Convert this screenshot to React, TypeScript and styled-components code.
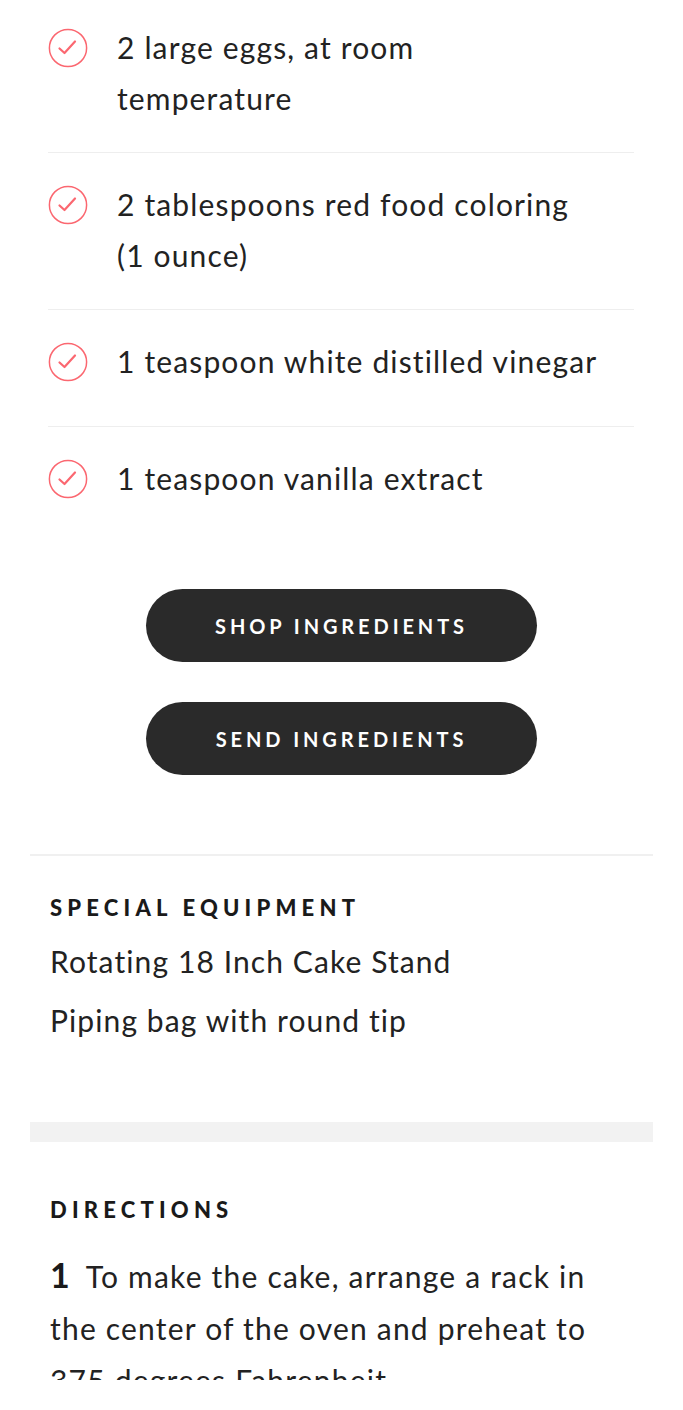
import styled, { createGlobalStyle } from 'styled-components';

const INGREDIENTS = [
  { lines: ['2 large eggs, at room', 'temperature'] },
  { lines: ['2 tablespoons red food coloring', '(1 ounce)'] },
  { lines: ['1 teaspoon white distilled vinegar'] },
  { lines: ['1 teaspoon vanilla extract'], last: true },
];

const EQUIPMENT = ['Rotating 18 Inch Cake Stand', 'Piping bag with round tip'];

const GlobalStyle = createGlobalStyle`
  html, body {
    margin: 0;
    padding: 0;
    background: #ffffff;
  }
  body {
    font-family: Lato, 'Open Sans', sans-serif;
    font-variant-ligatures: none;
    color: #222222;
    -webkit-font-smoothing: antialiased;
  }
`;

const Screen = styled.div`
  width: 683px;
  height: 1410px;
  overflow: hidden;
  background: #ffffff;
`;

const Viewport = styled.main`
  height: 1380px;
  overflow: hidden;
  padding: 0 30px;
  box-sizing: border-box;
`;

const IngredientList = styled.ul`
  list-style: none;
  margin: -4px 0 0;
  padding: 0 19px 0 18px;
`;

const IngredientRow = styled.li<{ $last?: boolean }>`
  display: flex;
  align-items: flex-start;
  gap: 29px;
  min-height: 117px;
  box-sizing: border-box;
  padding: 26px 0 28px;
  border-bottom: ${(p) => (p.$last ? 'none' : '1px solid #eeeeee')};
`;

const CheckBox = styled.span`
  flex: 0 0 40px;
  height: 40px;
  margin-top: 6px;
  display: flex;
  align-items: center;
  justify-content: center;
`;

const IngredientText = styled.span`
  display: flex;
  flex-direction: column;
  font-size: 30px;
  line-height: 51px;
  letter-spacing: 1.15px;
  color: #222222;
`;

const ButtonStack = styled.div`
  display: flex;
  flex-direction: column;
  align-items: center;
  gap: 40px;
  margin-top: 45px;
`;

const PillButton = styled.button`
  width: 391px;
  height: 73px;
  border: none;
  border-radius: 37px;
  background: #2a2a2a;
  color: #ffffff;
  font-family: Lato, sans-serif;
  font-size: 20px;
  font-weight: 700;
  letter-spacing: 3.9px;
  text-transform: uppercase;
  cursor: pointer;
`;

const Divider = styled.hr`
  margin: 79px 0 0;
  border: none;
  height: 2px;
  background: #f0f0f0;
`;

const Section = styled.section<{ $top: number }>`
  padding: ${(p) => p.$top}px 40px 0 20px;
`;

const Heading = styled.h2`
  margin: 0;
  font-size: 22px;
  line-height: 28px;
  font-weight: 900;
  letter-spacing: 5.2px;
  text-transform: uppercase;
  color: #1a1a1a;
`;

const EquipmentList = styled.ul`
  list-style: none;
  margin: 10px 0 0;
  padding: 0;
`;

const EquipmentItem = styled.li`
  font-size: 30px;
  line-height: 59px;
  letter-spacing: 1.1px;
  color: #222222;
`;

const GrayBar = styled.div`
  height: 20px;
  margin-top: 72px;
  background: #f2f2f2;
`;

const Step = styled.p`
  margin: 26px 0 0;
  font-size: 30px;
  line-height: 52px;
  letter-spacing: 1.2px;
  color: #222222;
`;

const StepNumber = styled.span`
  font-size: 34px;
  line-height: 1;
  font-weight: 700;
  letter-spacing: 0;
  color: #1a1a1a;
  margin-right: 16px;
`;

const CheckIcon = () => (
  <svg width="40" height="40" viewBox="0 0 40 40" fill="none">
    <circle cx="20" cy="20" r="18.6" stroke="#fb6770" strokeWidth="1.5" />
    <path
      d="M11.5 20.5 L16.5 25 L27 13.5"
      stroke="#fb6770"
      strokeWidth="2.2"
      strokeLinecap="round"
      strokeLinejoin="round"
    />
  </svg>
);

export default function App() {
  return (
    <Screen>
      <GlobalStyle />
      <Viewport>
        <IngredientList>
          {INGREDIENTS.map((item) => (
            <IngredientRow key={item.lines[0]} $last={item.last}>
              <CheckBox>
                <CheckIcon />
              </CheckBox>
              <IngredientText>
                {item.lines.map((l) => (
                  <span key={l}>{l}</span>
                ))}
              </IngredientText>
            </IngredientRow>
          ))}
        </IngredientList>

        <ButtonStack>
          <PillButton>Shop Ingredients</PillButton>
          <PillButton>Send Ingredients</PillButton>
        </ButtonStack>

        <Divider />

        <Section $top={38}>
          <Heading>Special Equipment</Heading>
          <EquipmentList>
            {EQUIPMENT.map((e) => (
              <EquipmentItem key={e}>{e}</EquipmentItem>
            ))}
          </EquipmentList>
        </Section>

        <GrayBar />

        <Section $top={54}>
          <Heading>Directions</Heading>
          <Step>
            <StepNumber>1</StepNumber>
            To make the cake, arrange a rack in the center of the oven and preheat to 375 degrees
            Fahrenheit.
          </Step>
        </Section>
      </Viewport>
    </Screen>
  );
}
